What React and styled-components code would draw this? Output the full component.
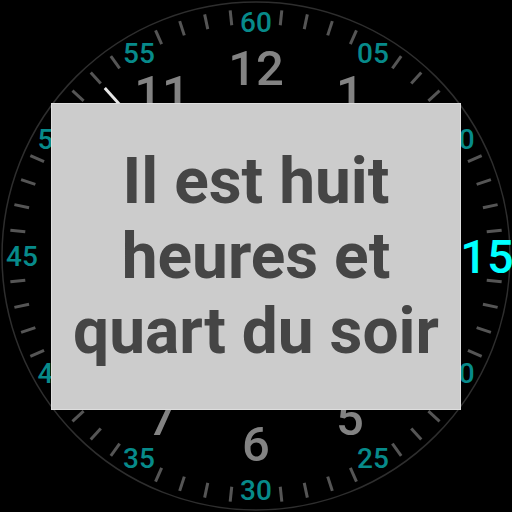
import React from 'react';
import styled, { createGlobalStyle } from 'styled-components';

const GlobalStyle = createGlobalStyle`
  html, body {
    margin: 0;
    padding: 0;
    background: #000;
  }
  body {
    font-family: Roboto, "Liberation Sans", sans-serif;
  }
`;

const Screen = styled.div`
  position: relative;
  width: 512px;
  height: 512px;
  background: #000;
  overflow: hidden;
`;

const Face = styled.svg`
  display: block;
  width: 512px;
  height: 512px;
  font-family: Roboto, "Liberation Sans", sans-serif;
`;

const Overlay = styled.div`
  position: absolute;
  inset: 0;
  display: flex;
  align-items: center;
  justify-content: center;
`;

const Card = styled.div`
  width: 410px;
  height: 307px;
  box-sizing: border-box;
  background: #cccccc;
  border: 1px solid #dedede;
  display: flex;
  align-items: center;
  justify-content: center;
`;

const Phrase = styled.p`
  margin: 0;
  text-align: center;
  font-family: Roboto, "Liberation Sans", sans-serif;
  font-weight: 700;
  font-size: 64px;
  line-height: 75px;
  color: #454545;
`;

const C = 256;
const polar = (minute, r) => {
  const a = (minute / 60) * Math.PI * 2;
  return [C + r * Math.sin(a), C - r * Math.cos(a)];
};

const hours = [12, 1, 2, 3, 4, 5, 6, 7, 8, 9, 10, 11];
const minuteLabel = (m) => (m === 0 ? '60' : String(m).padStart(2, '0'));

const ClockFace = ({ minute = 15, second = 53 }) => {
  const ticks = [];
  for (let m = 0; m < 60; m++) {
    if (m % 5 === 0) continue;
    const [x1, y1] = polar(m, 232);
    const [x2, y2] = polar(m, 247);
    ticks.push(
      <line key={m} x1={x1} y1={y1} x2={x2} y2={y2} stroke="#555" strokeWidth="3" />
    );
  }

  const minuteNums = [];
  for (let m = 0; m < 60; m += 5) {
    const active = m === minute;
    const [x, y] = polar(m, active ? 231 : 234);
    minuteNums.push(
      <text
        key={m}
        x={x}
        y={y}
        textAnchor="middle"
        dominantBaseline="central"
        fontSize={active ? 47 : 28}
        fontWeight="500"
        fill={active ? '#00ffff' : '#078a8a'}
      >
        {minuteLabel(m)}
      </text>
    );
  }

  const hourNums = hours.map((h, i) => {
    const [x, y] = polar(i * 5, 188);
    return (
      <text
        key={h}
        x={x}
        y={y}
        textAnchor="middle"
        dominantBaseline="central"
        fontSize="49"
        fontWeight="500"
        fill="#838383"
      >
        {h}
      </text>
    );
  });

  const [sx, sy] = polar(second, 226);

  return (
    <Face viewBox="0 0 512 512">
      <circle cx={C} cy={C} r="254" fill="#000" stroke="#2e2e2e" strokeWidth="1.5" />
      {ticks}
      {minuteNums}
      {hourNums}
      <line x1={C} y1={C} x2={sx} y2={sy} stroke="#e6e6e6" strokeWidth="3" />
    </Face>
  );
};

export default function App() {
  return (
    <>
      <GlobalStyle />
      <Screen>
        <ClockFace minute={15} second={53} />
        <Overlay>
          <Card>
            <Phrase>
              Il est huit
              <br />
              heures et
              <br />
              quart du soir
            </Phrase>
          </Card>
        </Overlay>
      </Screen>
    </>
  );
}
